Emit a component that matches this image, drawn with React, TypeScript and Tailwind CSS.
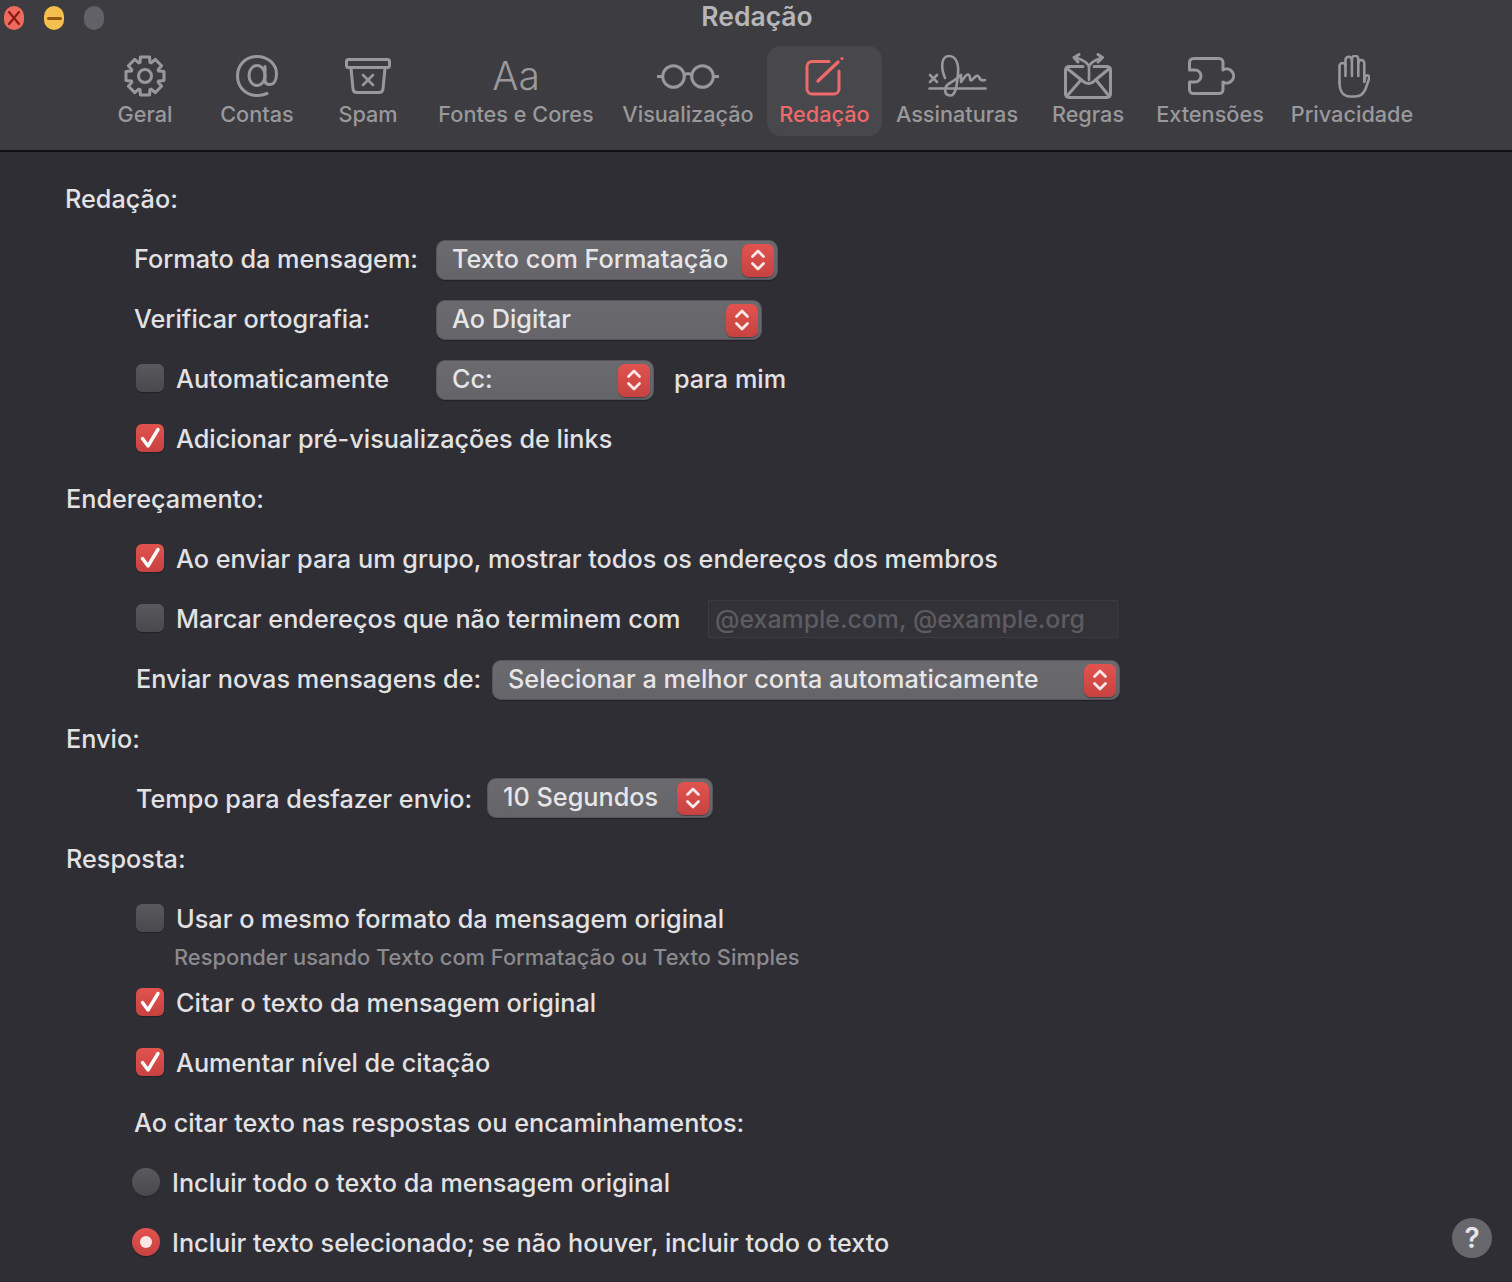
import React from "react";

const gearPath = (() => {
  const pts: string[] = [];
  const cx = 21;
  const cy = 21;
  for (let i = 0; i < 8; i++) {
    const a = (i * Math.PI) / 4 - Math.PI / 2;
    const step = Math.PI / 4;
    const list: [number, number][] = [
      [a - step * 0.3, 19.5],
      [a + step * 0.3, 19.5],
      [a + step * 0.44, 14.5],
      [a + step * 0.56, 14.5],
    ];
    for (const [t, r] of list) {
      pts.push(`${(cx + r * Math.cos(t)).toFixed(1)} ${(cy + r * Math.sin(t)).toFixed(1)}`);
    }
  }
  return "M" + pts.join("L") + "Z";
})();

function GearIcon() {
  return (
    <svg width="42" height="42" viewBox="0 0 42 42" fill="none" stroke="currentColor" strokeWidth="3" strokeLinejoin="round">
      <path d={gearPath} />
      <circle cx="21" cy="21" r="6.5" />
    </svg>
  );
}

function AtIcon() {
  return (
    <svg width="42" height="42" viewBox="0 0 42 42" fill="none" stroke="currentColor" strokeWidth="3" strokeLinecap="round">
      <path d="M31 38.5 C27.5 40 24.5 40.5 21.5 40.5 C9.5 40.5 1.5 32 1.5 21 C1.5 10 9.5 1.5 21 1.5 C32.5 1.5 40.5 9.5 40.5 19 C40.5 26 37.5 29.5 33.5 29.5 C30.5 29.5 29 27.5 29 25 V11.5" />
      <ellipse cx="21" cy="20.5" rx="8" ry="10" />
    </svg>
  );
}

function SpamIcon() {
  return (
    <svg width="46" height="36" viewBox="0 0 46 36" fill="none" stroke="currentColor" strokeWidth="3" strokeLinecap="round" strokeLinejoin="round">
      <rect x="1.5" y="1.5" width="43" height="8" rx="2" />
      <path d="M6 10 L8 31 Q8.4 34.5 12 34.5 H34 Q37.6 34.5 38 31 L40 10" />
      <path d="M18 17 L28 27 M28 17 L18 27" strokeWidth="2.6" />
    </svg>
  );
}

function GlassesIcon() {
  return (
    <svg width="62" height="25" viewBox="0 0 62 25" fill="none" stroke="currentColor" strokeWidth="3" strokeLinecap="round">
      <circle cx="16.5" cy="12.5" r="10.8" />
      <circle cx="45.5" cy="12.5" r="10.8" />
      <path d="M27.5 11 Q31 8 34.5 11" />
      <path d="M1 12.5 H5.5 M56.5 12.5 H61" />
    </svg>
  );
}

function ComposeIcon() {
  return (
    <svg width="40" height="40" viewBox="0 0 40 40" fill="none" stroke="currentColor" strokeWidth="3" strokeLinecap="round">
      <path d="M24 5.5 H7 a5 5 0 0 0 -5 5 V33 a5 5 0 0 0 5 5 H29 a5 5 0 0 0 5 -5 V15" />
      <path d="M13 25 L33 6" strokeWidth="3.4" />
      <circle cx="37" cy="2.5" r="1.6" fill="currentColor" stroke="none" />
    </svg>
  );
}

function SignatureIcon() {
  return (
    <svg width="59" height="44" viewBox="0 0 59 44" fill="none" stroke="currentColor" strokeWidth="2.6" strokeLinecap="round" strokeLinejoin="round">
      <path d="M1.5 34.5 H57.5" />
      <path d="M2 21 L9 28 M9 21 L2 28" />
      <path d="M17 24 C12 12 14 2 21 2 C28 2 31 10 30 20 C29 30 28 42 22 41.5 C16 41 15 33 22 29 C27 26 31 23 33 21 L33 28 C36 24 39 19 41 21 C43 23 41 28 44 26 C47 23 49 20 51 23 C52 26 54 27 57 26" />
    </svg>
  );
}

function RulesIcon() {
  return (
    <svg width="48" height="46" viewBox="0 0 48 46" fill="none" stroke="currentColor" strokeWidth="3" strokeLinecap="round" strokeLinejoin="round">
      <path d="M19 13.5 H5 a3.5 3.5 0 0 0 -3.5 3.5 V41 a3.5 3.5 0 0 0 3.5 3.5 H43 a3.5 3.5 0 0 0 3.5 -3.5 V17 a3.5 3.5 0 0 0 -3.5 -3.5 H30" />
      <path d="M2.5 15 L20 29 Q24.5 32 29 29 L46 15" />
      <path d="M2.5 43.5 L17 27 M45.5 43.5 L32 27" />
      <path d="M25 27 V15 C25 10 19 7 13 5 M25 15 C25 10 31 7 37 5" strokeWidth="2.6" />
      <path d="M10 4.5 L15 1.5 M10 4.5 L14 9" />
      <path d="M38.5 4.5 L34 1.5 M38.5 4.5 L34 9" />
    </svg>
  );
}

function ExtensionIcon() {
  return (
    <svg className="ml-[4px]" width="48" height="38" viewBox="0 0 48 38" fill="none" stroke="currentColor" strokeWidth="3" strokeLinejoin="round">
      <path d="M5.5 1.5 H31 a4 4 0 0 1 4 4 V13 a7 7 0 1 1 0 12 V32.5 a4 4 0 0 1 -4 4 H5.5 a4 4 0 0 1 -4 -4 V25 H7 a6 6 0 1 0 0 -12 H1.5 V5.5 a4 4 0 0 1 4 -4 Z" />
    </svg>
  );
}

function HandIcon() {
  return (
    <svg className="ml-[4px]" width="32" height="43" viewBox="0 0 32 43" fill="none" stroke="currentColor" strokeWidth="2.6" strokeLinecap="round" strokeLinejoin="round">
      <path d="M1.5 27 V11 a3 3 0 0 1 6 0 V21" />
      <path d="M7.5 11 V5 a3.2 3.2 0 0 1 6.4 0 V21" />
      <path d="M13.9 5 V4 a3.2 3.2 0 0 1 6.4 0 V21" />
      <path d="M20.3 8 a3 3 0 0 1 6 0 V27 L27.5 21 a2.4 2.4 0 0 1 4 1.5 L27.5 34 C25.5 39 22.5 41.5 17 41.5 H12 C5 41.5 1.5 36 1.5 27" />
    </svg>
  );
}

const tabs = [
  { label: "Geral", width: "w-[112px]", icon: <GearIcon /> },
  { label: "Contas", width: "w-[112px]", icon: <AtIcon /> },
  { label: "Spam", width: "w-[110px]", icon: <SpamIcon /> },
  { label: "Fontes e Cores", width: "w-[186px]", icon: <span className="text-[39px] leading-[42px] font-light">Aa</span> },
  { label: "Visualização", width: "w-[158px]", icon: <GlassesIcon /> },
  { label: "Redação", width: "w-[115px]", icon: <ComposeIcon />, active: true },
  { label: "Assinaturas", width: "w-[150px]", icon: <SignatureIcon /> },
  { label: "Regras", width: "w-[112px]", icon: <RulesIcon /> },
  { label: "Extensões", width: "w-[132px]", icon: <ExtensionIcon /> },
  { label: "Privacidade", width: "w-[152px]", icon: <HandIcon /> },
];

function Select({ label, width, raised }: { label: string; width: string; raised?: boolean }) {
  return (
    <div className={`flex h-[40px] items-center justify-between rounded-[9px] border border-[#57565b] bg-gradient-to-b from-[#6b6a6f] to-[#656469] pl-[15px] pr-[3px] shadow-[0_1px_1px_rgba(0,0,0,0.3)] ${raised ? "-mt-[4px]" : ""} ${width}`}>
      <span className="text-[#e6e5e8]">{label}</span>
      <span className="flex h-[33px] w-[32px] items-center justify-center rounded-[7px] bg-gradient-to-b from-[#e2534f] to-[#c64240] shadow-[0_1px_1px_rgba(0,0,0,0.35)]">
        <svg width="18" height="26" viewBox="0 0 18 26" fill="none" stroke="#f6e9e9" strokeWidth="2.8" strokeLinecap="round" strokeLinejoin="round">
          <path d="M3.5 9.5 L9 4 L14.5 9.5" />
          <path d="M3.5 16.5 L9 22 L14.5 16.5" />
        </svg>
      </span>
    </div>
  );
}

function Checkbox({ checked }: { checked?: boolean }) {
  return (
    <span
      className={`-mt-[4px] flex h-[28px] w-[28px] shrink-0 items-center justify-center rounded-[6px] shadow-[0_1px_1px_rgba(0,0,0,0.3)] ${
        checked ? "bg-gradient-to-b from-[#e2534f] to-[#c64240]" : "bg-gradient-to-b from-[#5a595e] to-[#49484d]"
      }`}
    >
      {checked && (
        <svg width="22" height="22" viewBox="0 0 22 22" fill="none" stroke="#fff" strokeWidth="3.4" strokeLinecap="round" strokeLinejoin="round">
          <path d="M3.5 11.5 L9 19 L19 2.5" />
        </svg>
      )}
    </span>
  );
}

function Radio({ checked }: { checked?: boolean }) {
  return (
    <span
      className={`-mt-[4px] flex h-[28px] w-[28px] shrink-0 items-center justify-center rounded-full shadow-[0_1px_1px_rgba(0,0,0,0.3)] ${
        checked ? "bg-gradient-to-b from-[#e2534f] to-[#c64240]" : "bg-gradient-to-b from-[#5a595e] to-[#49484d]"
      }`}
    >
      {checked && <span className="h-[12px] w-[12px] rounded-full bg-[#fbe6e6]" />}
    </span>
  );
}

function Heading({ children, className = "pl-[66px]" }: { children: React.ReactNode; className?: string }) {
  return <div className={`flex h-[60px] items-center ${className}`}>{children}</div>;
}

function Row({ children, className = "pl-[136px]" }: { children: React.ReactNode; className?: string }) {
  return <div className={`flex h-[60px] items-center ${className}`}>{children}</div>;
}

export default function App() {
  return (
    <div className="relative h-[1282px] w-full overflow-hidden bg-[#2f2e34] font-['Inter',sans-serif] text-[25.25px] font-[450] text-[#e2e1e3]">
      {/* Toolbar */}
      <header className="h-[152px] border-b-2 border-[#111013] bg-[#3d3c41]">
        <div className="grid h-[46px] grid-cols-[1fr_auto_1fr] items-start">
          <div className="flex gap-[20px] pl-[4px] pt-[6px]">
            <span className="flex h-[24px] w-[20px] items-center justify-center rounded-full bg-[#ee6a5f]">
              <svg width="14" height="16" viewBox="0 0 14 16" fill="none" stroke="#8c1a12" strokeWidth="2.2" strokeLinecap="round">
                <path d="M2 2 L12 14 M12 2 L2 14" />
              </svg>
            </span>
            <span className="flex h-[24px] w-[20px] items-center justify-center rounded-full bg-[#f5bf4f]">
              <span className="h-[3px] w-[15px] rounded-full bg-[#8f5a0f]" />
            </span>
            <span className="h-[24px] w-[20px] rounded-full bg-[#626167]" />
          </div>
          <div className="pl-[2px] text-[26.5px] font-semibold leading-[32px] text-[#b6b5ba]">Redação</div>
          <div />
        </div>
        <nav className="flex pl-[89px]">
          {tabs.map((tab) => (
            <div
              key={tab.label}
              className={`flex h-[90px] flex-col items-center rounded-[14px] ${tab.width} ${
                tab.active ? "bg-[#48474c] text-[#ee6a6a]" : "text-[#99989b]"
              }`}
            >
              <div className="flex h-[60px] shrink-0 items-center justify-center">{tab.icon}</div>
              <div className="-mt-[5px] text-[21.7px] leading-[26px]">{tab.label}</div>
            </div>
          ))}
        </nav>
      </header>

      <main className="pt-[18px]">
        <Heading className="pl-[65px]">Redação:</Heading>
        <Row className="pl-[134px]">
          <span className="w-[302px]">Formato da mensagem:</span>
          <Select label="Texto com Formatação" width="w-[342px]" />
        </Row>
        <Row className="pl-[134px]">
          <span className="w-[302px]">Verificar ortografia:</span>
          <Select label="Ao Digitar" width="w-[326px]" />
        </Row>
        <Row>
          <Checkbox />
          <span className="ml-[12px] w-[260px]">Automaticamente</span>
          <Select label="Cc:" width="w-[218px]" />
          <span className="ml-[20px]">para mim</span>
        </Row>
        <Row>
          <Checkbox checked />
          <span className="ml-[12px]">Adicionar pré-visualizações de links</span>
        </Row>

        <Heading>Endereçamento:</Heading>
        <Row>
          <Checkbox checked />
          <span className="ml-[12px]">Ao enviar para um grupo, mostrar todos os endereços dos membros</span>
        </Row>
        <Row>
          <Checkbox />
          <span className="ml-[12px] w-[532px]">Marcar endereços que não terminem com</span>
          <div className="-mt-[2px] flex h-[38px] w-[410px] items-center border border-[#3c3b41] bg-[#333238] pl-[6px] pt-[2px] text-[24.9px] text-[#5d5c61]">
            @example.com, @example.org
          </div>
        </Row>
        <Row className="pl-[136px]">
          <span className="w-[356px]">Enviar novas mensagens de:</span>
          <Select label="Selecionar a melhor conta automaticamente" width="w-[628px]" />
        </Row>

        <Heading>Envio:</Heading>
        <Row className="pl-[136px]">
          <span className="w-[351px]">Tempo para desfazer envio:</span>
          <Select raised label="10 Segundos" width="w-[226px]" />
        </Row>

        <Heading>Resposta:</Heading>
        <Row>
          <Checkbox />
          <span className="ml-[12px]">Usar o mesmo formato da mensagem original</span>
        </Row>
        <div className="mb-[8px] h-[16px] pl-[174px] text-[21.86px] leading-[14px] text-[#8b8a8e]">
          Responder usando Texto com Formatação ou Texto Simples
        </div>
        <Row>
          <Checkbox checked />
          <span className="ml-[12px]">Citar o texto da mensagem original</span>
        </Row>
        <Row>
          <Checkbox checked />
          <span className="ml-[12px]">Aumentar nível de citação</span>
        </Row>
        <Row className="pl-[134px]">Ao citar texto nas respostas ou encaminhamentos:</Row>
        <Row className="pl-[132px]">
          <Radio />
          <span className="ml-[12px]">Incluir todo o texto da mensagem original</span>
        </Row>
        <Row className="pl-[132px]">
          <Radio checked />
          <span className="ml-[12px]">Incluir texto selecionado; se não houver, incluir todo o texto</span>
        </Row>
      </main>

      <button className="absolute left-[1452px] top-[1218px] flex h-[40px] w-[40px] items-center justify-center rounded-full bg-[#68676c] text-[28px] font-semibold text-[#e6e5e8]">
        ?
      </button>
    </div>
  );
}
